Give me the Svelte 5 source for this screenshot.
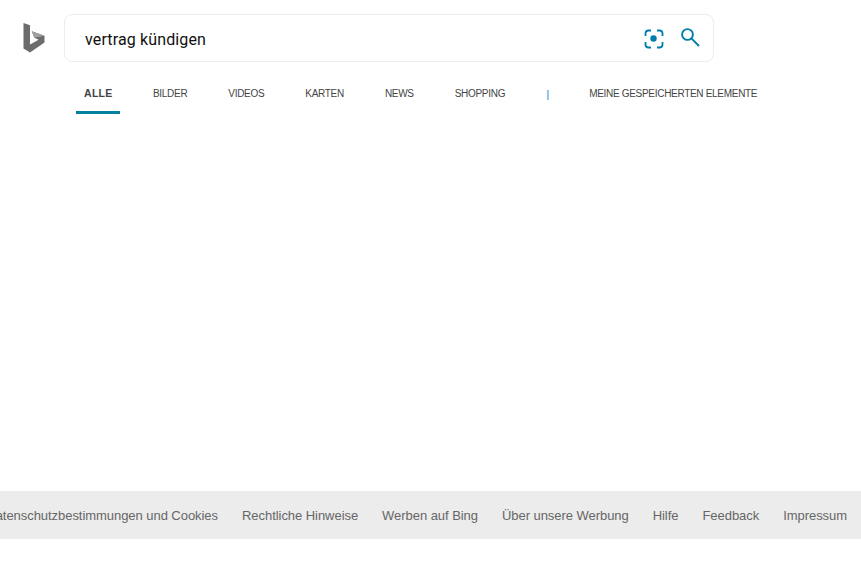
<script lang="ts">
  const tabs = ["Alle", "Bilder", "Videos", "Karten", "News", "Shopping"];
  const footerLinks = [
    "Datenschutzbestimmungen und Cookies",
    "Rechtliche Hinweise",
    "Werben auf Bing",
    "Über unsere Werbung",
    "Hilfe",
    "Feedback",
    "Impressum"
  ];
</script>

<div class="page">
  <header class="top">
    <a class="logo" href="#top" aria-label="Bing">
      <svg width="22" height="30" viewBox="0 0 22 30">
        <path d="M0.5 0 L7 2.2 V21.6 L15.6 16.7 L11.4 14.7 L8.8 8.3 L21.5 12.7 V19.6 L7 29.6 L0.5 25.6 Z" fill="#6c6c6c" />
        <path d="M8.8 8.3 L21.5 12.7 L11.4 14.7 Z" fill="#a0a0a0" />
      </svg>
    </a>
    <div class="search">
      <span class="query">vertrag kündigen</span>
      <svg class="cam" width="20" height="20" viewBox="0 0 20 20" fill="none" stroke="#007daa" stroke-width="1.8">
        <path d="M7 1.5 H4 A3 3 0 0 0 1.5 4.5 V7 M13 1.5 H16 A3 3 0 0 1 18.5 4.5 V7 M7 18.5 H4 A3 3 0 0 1 1.5 15.5 V13 M13 18.5 H16 A3 3 0 0 0 18.5 15.5 V13" />
        <circle cx="9.5" cy="9.5" r="3.2" fill="#007daa" stroke="none" />
      </svg>
      <svg class="mag" width="19" height="19" viewBox="0 0 19 19" fill="none" stroke="#007daa" stroke-width="1.9">
        <circle cx="6.5" cy="6.5" r="5.4" />
        <path d="M10.4 10.4 L18 18" />
      </svg>
    </div>
  </header>

  <nav class="tabs">
    {#each tabs as tab, i}
      <a class="tab" class:active={i === 0} href="#top">{tab}</a>
    {/each}
    <span class="sep">|</span>
    <a class="tab" href="#top">Meine gespeicherten Elemente</a>
  </nav>

  <main class="results"></main>

  <footer class="foot">
    {#each footerLinks as link}
      <a href="#top">{link}</a>
    {/each}
  </footer>
</div>

<style>
  :global(body) {
    background: #fff;
    font-family: "Liberation Sans", Arial, sans-serif;
    overflow: hidden;
  }

  .page {
    width: 861px;
    height: 573px;
    overflow: hidden;
  }

  .top {
    display: flex;
    align-items: flex-start;
    padding: 14px 0 0 23px;
    height: 48px;
  }

  .logo {
    display: block;
    width: 22px;
    height: 30px;
    margin: 9px 19px 0 0;
  }

  .logo svg { display: block; }

  .search {
    display: flex;
    align-items: center;
    box-sizing: border-box;
    width: 650px;
    height: 48px;
    padding: 0 13px 0 20px;
    border: 1px solid #ececec;
    border-radius: 8px;
  }

  .query {
    flex: 1;
    padding-top: 2px;
    font-family: Roboto, sans-serif;
    font-size: 16px;
    letter-spacing: 0.13px;
    color: #111;
  }

  .cam { margin: 1px 17px 0 0; }
  .mag { margin-bottom: 2px; }

  .tabs {
    display: flex;
    align-items: flex-start;
    gap: 41px;
    height: 52px;
    padding-left: 84px;
    box-sizing: border-box;
    padding-top: 26px;
  }

  .tab {
    position: relative;
    font-size: 10px;
    line-height: 12px;
    letter-spacing: -0.3px;
    color: #444;
    text-transform: uppercase;
    text-decoration: none;
  }

  .tab.active {
    width: 28px;
    margin-top: -1px;
    font-size: 10.5px;
    font-weight: 700;
    letter-spacing: 0.3px;
    white-space: nowrap;
  }

  .tab.active::after {
    content: "";
    position: absolute;
    left: -8px;
    right: -8px;
    top: 24px;
    height: 3px;
    background: #00809d;
  }

  .sep {
    width: 2px;
    font-size: 11px;
    font-weight: 700;
    line-height: 12px;
    color: #6db3e0;
  }

  .results { height: 377px; }

  .foot {
    display: flex;
    justify-content: flex-end;
    align-items: center;
    gap: 24px;
    height: 48px;
    padding-right: 14px;
    background: #ececec;
    white-space: nowrap;
  }

  .foot a {
    flex: none;
    font-size: 13px;
    letter-spacing: -0.05px;
    color: #666;
    text-decoration: none;
  }
</style>
